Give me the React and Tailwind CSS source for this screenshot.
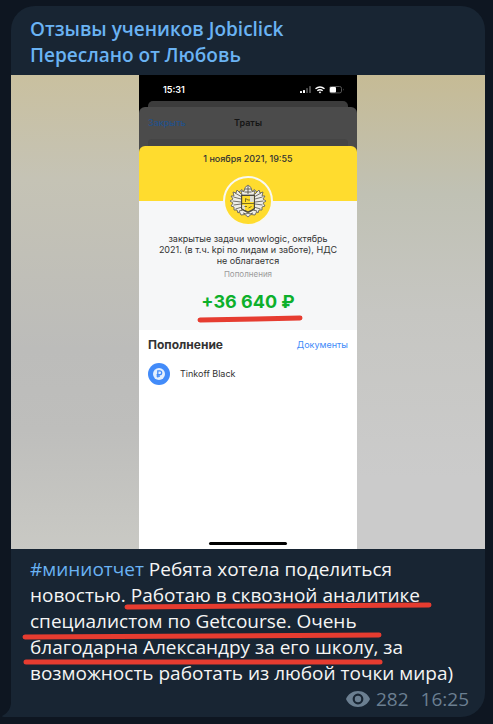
import React from "react";

const feathers = [
  "M12 11 L7 6 L6 9 L3 8 L4 12 L1 12 L3 15 L0 17 L3 19 L1 22 L4 23 L4 26 L7 26 L8 29 L12 26Z",
  "M24 11 L29 6 L30 9 L33 8 L32 12 L35 12 L33 15 L36 17 L33 19 L35 22 L32 23 L32 26 L29 26 L28 29 L24 26Z",
];

const Crest = () => (
  <svg viewBox="0 0 36 34" className="w-9 h-[34px]" aria-hidden="true">
    <g fill="#eeede6" stroke="#66645b" strokeWidth="0.9" strokeLinejoin="round">
      {feathers.map((d) => (
        <path key={d} d={d} />
      ))}
      <path d="M12 13 L5 9 M11 15 L3.5 13 M11 18 L2.5 17 M11 20 L3.5 21 M12 23 L5.5 25 M24 13 L31 9 M25 15 L32.5 13 M25 18 L33.5 17 M25 20 L32.5 21 M24 23 L30.5 25" />
      <path d="M9 8 L12 5.5 L14 8 M27 8 L24 5.5 L22 8" />
      <path d="M12 11 L11 7 L14 7.5 L15 3.5 L18 1 L21 3.5 L22 7.5 L25 7 L24 11Z" />
      <path d="M15 5 H21 M14.5 8 H21.5 M18 2 V10" stroke="#57554d" />
      <path d="M9 27 L13 26 L18 29 L23 26 L27 27 L25 31 L21 30.5 L18 33 L15 30.5 L11 31Z" />
      <path d="M13 29 L16 30 L18 29 L20 30 L23 29" stroke="#57554d" />
    </g>
    <path
      d="M11.6 11.5 H24.4 V24.5 Q22 26.5 18 28 Q14 26.5 11.6 24.5Z"
      fill="#ffdd2d"
      stroke="#4a483f"
      strokeWidth="1.2"
    />
    <path d="M20 12 H23.8 V18 H20Z M12.2 21 H15 V26 L12.2 24.4Z" fill="#deded6" />
    <path
      d="M12 19.5 H24 M15.5 18 V14.5 L18 16 H20 M14.5 22.5 H17 M18.5 24 L21.5 22.5"
      fill="none"
      stroke="#7c7021"
      strokeWidth="1"
    />
  </svg>
);

const StatusIcons = () => (
  <svg viewBox="0 0 46 10" className="w-[46px] h-[10px]" aria-hidden="true">
    <rect x="1" y="6" width="2" height="2" rx="0.5" fill="#fff" />
    <rect x="4" y="5" width="2" height="3" rx="0.5" fill="#fff" />
    <rect x="7" y="3" width="2" height="5" rx="0.5" fill="#4a4a4a" />
    <rect x="10" y="1" width="2" height="7" rx="0.5" fill="#4a4a4a" />
    <g fill="none" stroke="#fff" strokeWidth="1.4">
      <path d="M16.5 3.8 Q21 0 25.5 3.8" />
      <path d="M18.3 5.8 Q21 3.5 23.7 5.8" />
    </g>
    <path d="M19.6 7 Q21 6 22.4 7 L21 8.6Z" fill="#fff" />
    <rect x="30.5" y="1.5" width="12" height="6.4" rx="1.8" fill="none" stroke="#555" />
    <rect x="31" y="2" width="6" height="5.4" rx="1" fill="#fff" />
    <path d="M44 3.6 Q45.2 4.7 44 5.8Z" fill="#666" />
  </svg>
);

const RubleIcon = () => (
  <svg viewBox="0 0 22 22" className="w-[22px] h-[22px]" aria-hidden="true">
    <circle cx="11" cy="11" r="11" fill="#428bf9" />
    <circle cx="11" cy="11" r="6" fill="#e4effe" />
    <path
      d="M9.8 14.5 V7.8 H11.8 A1.9 1.9 0 0 1 11.8 11.6 H8.6 M8.6 13.1 H12"
      fill="none"
      stroke="#428bf9"
      strokeWidth="1.3"
    />
  </svg>
);

const EyeIcon = () => (
  <svg viewBox="0 0 24 16" className="w-6 h-4" aria-hidden="true">
    <path
      fillRule="evenodd"
      fill="#6b7f91"
      d="M12 0 C6.5 0 2 3.2 0 8 C2 12.8 6.5 16 12 16 C17.5 16 22 12.8 24 8 C22 3.2 17.5 0 12 0Z M12 2.6 A5.4 5.4 0 1 1 12 13.4 A5.4 5.4 0 1 1 12 2.6Z"
    />
    <circle cx="12" cy="8" r="3.2" fill="#6b7f91" />
  </svg>
);

const PhoneScreen = () => (
  <div className="flex flex-col w-[218px] h-full bg-white text-[#333] font-['Inter',sans-serif]">
    <div className="bg-black">
      <div className="flex items-center justify-between h-[26px] pt-1 pl-6 pr-3 text-white">
        <span className="text-[9px] font-semibold">15:31</span>
        <StatusIcons />
      </div>
      <div className="h-[6px] mx-[9px] rounded-t-[5px] bg-[#3c3c3c]" />
      <div className="rounded-t-[6px] bg-[#4b4b4b]">
        <div className="grid grid-cols-3 items-center h-8 px-[9px] text-[9px]">
          <a href="#close" className="font-medium text-[#23518a]">Закрыть</a>
          <h2 className="text-center font-semibold text-[#151515]">Траты</h2>
        </div>
        <div className="h-[7px] mx-[9px] rounded-t-[4px] bg-[#454545]" />
      </div>
    </div>

    <div className="bg-[#4b4b4b]">
      <div className="h-[55px] pt-[7px] rounded-t-[6px] bg-[#ffdc2e] text-center text-[9px] leading-3 font-medium">
        1 ноября 2021, 19:55
      </div>
    </div>

    <div className="flex flex-col items-center h-[129px] bg-[#f6f7f8] text-center">
      <div className="flex shrink-0 items-center justify-center w-[50px] h-[50px] -mt-[25px] rounded-full border-2 border-[#f8f8f2] bg-[#ffdc2e]">
        <Crest />
      </div>
      <p className="mt-[7px] px-[18px] text-[9px] leading-[11px]">
        закрытые задачи wowlogic, октябрь 2021. (в т.ч. kpi по лидам и заботе), НДС не облагается
      </p>
      <p className="mt-[3px] text-[8px] leading-[11px] text-[#9b9b9b]">Пополнения</p>
      <div className="relative mt-[10px]">
        <p className="text-[18px] leading-6 font-bold text-[#0db02b]">+36 640 ₽</p>
        <svg viewBox="0 0 108 8" className="absolute top-[25px] -left-[5px] w-[108px] h-2 max-w-none" aria-hidden="true">
          <path d="M4 5 L60 4 L104 3" stroke="#e63c30" strokeWidth="5" strokeLinecap="round" fill="none" />
        </svg>
      </div>
    </div>

    <div className="flex flex-col flex-1 px-[9px] pt-[6px]">
      <div className="flex items-center justify-between">
        <h3 className="text-[12px] leading-[18px] font-bold">Пополнение</h3>
        <a href="#documents" className="text-[9px] text-[#428bf9]">Документы</a>
      </div>
      <div className="flex items-center gap-[10px] mt-[9px] text-[9px]">
        <RubleIcon />
        <span>Tinkoff Black</span>
      </div>
      <div className="w-[78px] h-[3px] mt-auto mb-1 mx-auto rounded-full bg-black" />
    </div>
  </div>
);

const App = () => {
  return (
    <main className="min-h-screen bg-[#0e1621] pt-[6px] pb-[7px] pl-[11px] pr-2 font-['Open_Sans',sans-serif]">
      <article className="relative rounded-t-[24px] rounded-br-[24px] bg-[#182533]">
        <svg viewBox="0 0 10 15" className="absolute bottom-0 -left-[9px] w-[10px] h-[15px]" aria-hidden="true">
          <path d="M10 0 H9 C9 6 6 11 0 14 Q0 15 2 15 H10Z" fill="#182533" />
        </svg>

        <header className="px-[19px] pt-[10px] pb-[7px] text-[19px] leading-[26px] font-semibold text-[#6ab3f3]">
          <p>Отзывы учеников Jobiclick</p>
          <p>Переслано от Любовь</p>
        </header>

        <div className="flex justify-center aspect-square">
          <div className="flex-1 bg-[linear-gradient(#c9c09f,#c5c3b5_22%,#bcbcba_58%,#bebebc_75%,#c9c9c4)]" />
          <PhoneScreen />
          <div className="flex-1 bg-[linear-gradient(#c6bb95,#c0c1b4_25%,#c6c6c2_50%,#cbcbcb_85%)]" />
        </div>

        <div className="relative px-[19px] pt-[7px] text-[19px] leading-[26px] text-[#f5f5f5]">
          <p>
            <a href="#report" className="text-[#6ab3f3]">#миниотчет</a> Ребята хотела поделиться
            новостью. Работаю в сквозной аналитике специалистом по Getcourse. Очень благодарна
            Александру за его школу, за возможность работать из любой точки мира)
          </p>
          <svg viewBox="0 0 440 138" className="absolute top-0 left-0 w-[440px] h-[138px]" aria-hidden="true">
            <g stroke="#e63c30" strokeWidth="5" strokeLinecap="round" fill="none">
              <path d="M116 58 L260 57 L418 56" />
              <path d="M14 88 L200 87 L368 86" />
              <path d="M15 113 H369" />
            </g>
          </svg>
        </div>

        <footer className="flex items-center justify-end pr-4 pb-[5px] text-[19px] leading-[26px] text-[#6b7f91]">
          <EyeIcon />
          <span className="ml-[6px]">282</span>
          <time className="ml-3">16:25</time>
        </footer>
      </article>
    </main>
  );
};

export default App;
